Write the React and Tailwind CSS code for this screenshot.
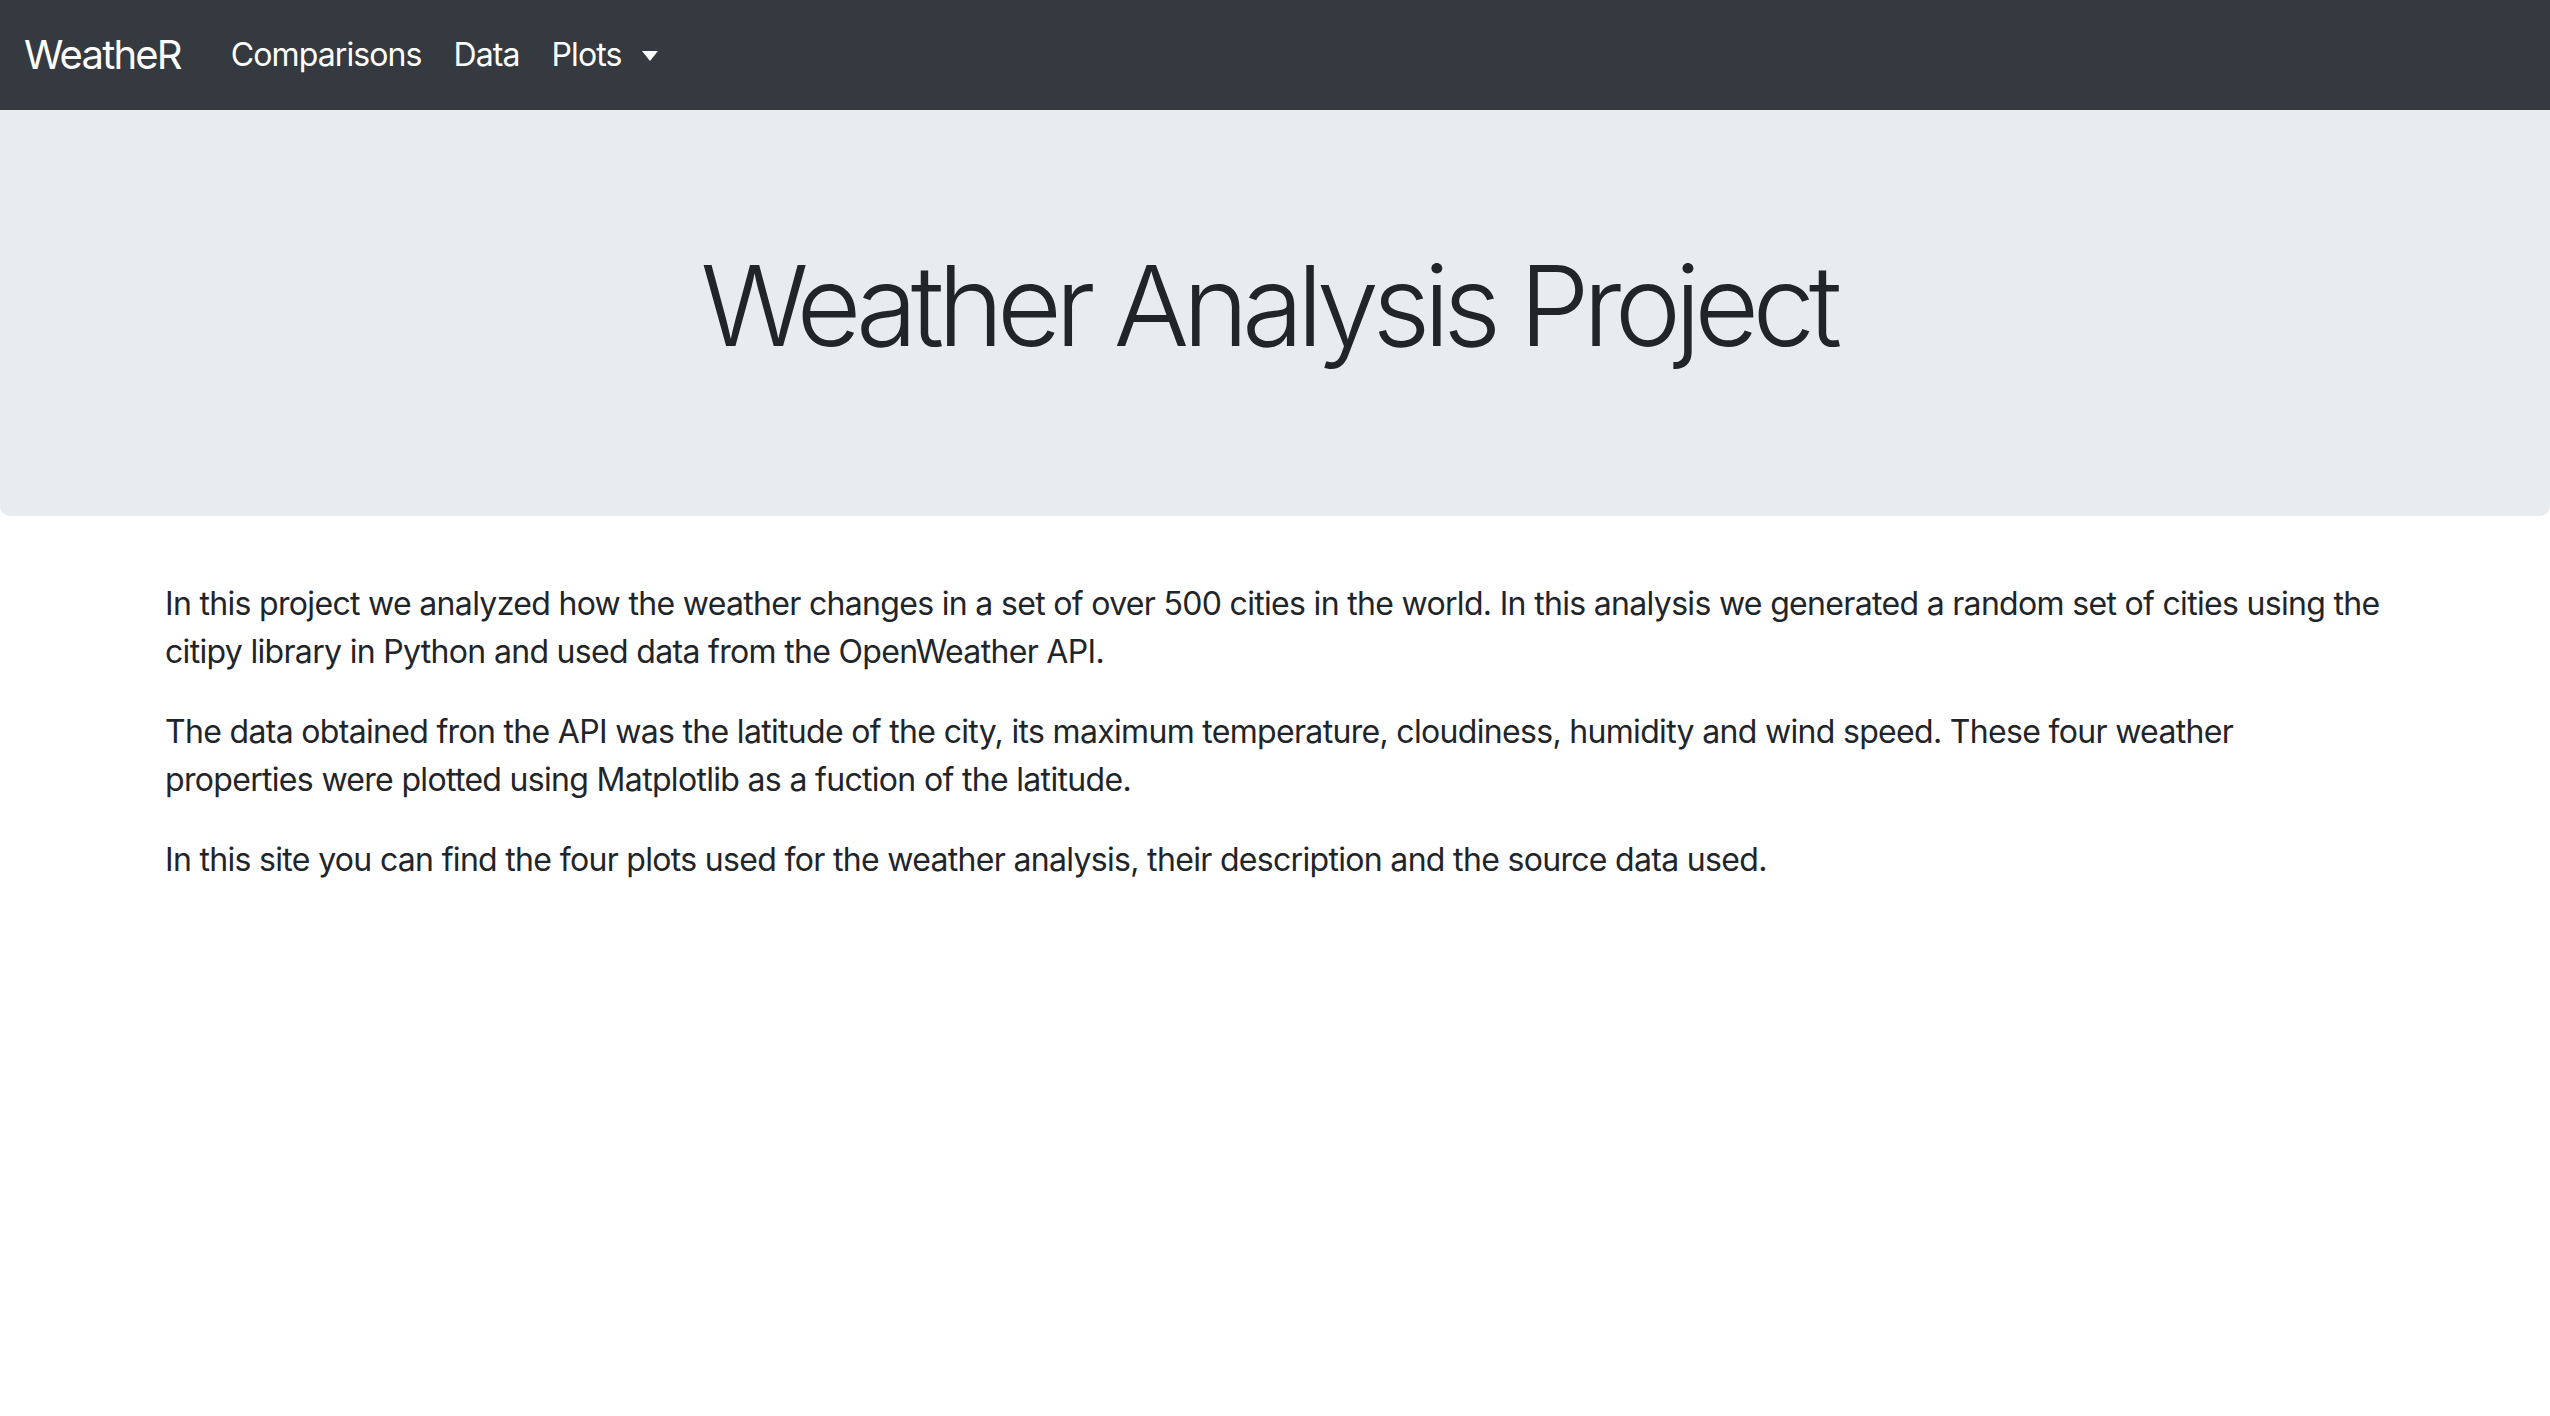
export default function App() {
	return (
		<div className="min-h-screen bg-white text-[#212529]" style={{ fontFamily: "Inter, 'Liberation Sans', sans-serif" }}>
			<nav className="flex h-[110px] items-center bg-[#343a40] pl-[24px]">
				<a className="mr-[50px] text-[40px] leading-none text-white tracking-[-1.8px]">WeatheR</a>
				<div className="flex items-center gap-[32px] text-[32px] text-white tracking-[-0.9px]">
					<a>Comparisons</a>
					<a>Data</a>
					<a className="flex items-center">
						Plots
						<span className="ml-[20px] mt-[2px] h-0 w-0 border-x-[8px] border-t-[10px] border-x-transparent border-t-white"></span>
					</a>
				</div>
			</nav>

			<div className="mb-[64px] rounded-b-[10px] bg-[#e9ecef] pl-[64px] pr-[78px] py-[128px] pb-[144px]">
				<h1 className="text-center text-[112px] font-light leading-[1.2] tracking-[-6.6px]">
					Weather Analysis Project
				</h1>
			</div>

			<div className="mx-auto max-w-[2280px] px-[30px] text-[32px] leading-[48px] tracking-[-0.68px]">
				<p className="mb-[32px]">
					In this project we analyzed how the weather changes in a set of over 500 cities in the world. In this analysis we generated a random set of cities using the citipy library in Python and used data from the OpenWeather API.
				</p>
				<p className="mb-[32px]">
					The data obtained fron the API was the latitude of the city, its maximum temperature, cloudiness, humidity and wind speed. These four weather properties were plotted using Matplotlib as a fuction of the latitude.
				</p>
				<p className="mb-[32px]">
					In this site you can find the four plots used for the weather analysis, their description and the source data used.
				</p>
			</div>
		</div>
	);
}
